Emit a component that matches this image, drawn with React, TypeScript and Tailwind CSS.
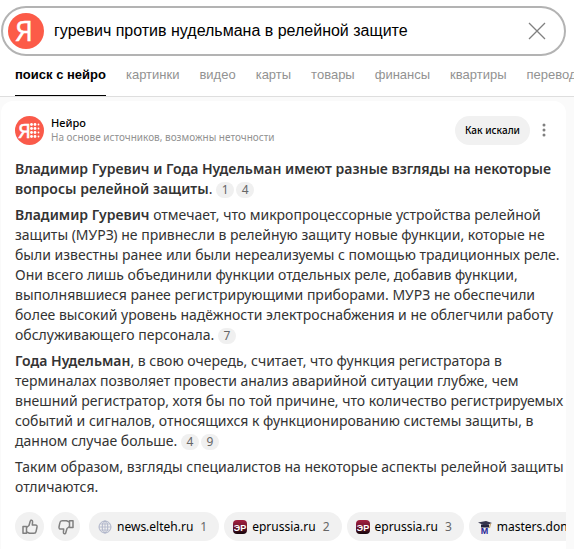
import { FC, ReactNode } from 'react';

const tabs = ['картинки', 'видео', 'карты', 'товары', 'финансы', 'квартиры', 'перевод'];

const sources = [
  { site: 'news.elteh.ru', num: 1, icon: 'globe' },
  { site: 'eprussia.ru', num: 2, icon: 'ep' },
  { site: 'eprussia.ru', num: 3, icon: 'ep' },
  { site: 'masters.don', num: 4, icon: 'masters' },
];

const Logo: FC = () => (
  <svg viewBox="0 0 36 36" className="size-9 shrink-0" aria-hidden="true">
    <circle cx="18" cy="18" r="18" fill="#fc5b48" />
    <text x="16" y="28" textAnchor="middle" fontSize="28" fill="#fff" stroke="#fff" strokeWidth="0.5" fontFamily="Open Sans, sans-serif">Я</text>
  </svg>
);

const NeuroLogo: FC = () => (
  <svg viewBox="0 0 29 29" className="size-[29px] shrink-0" aria-hidden="true">
    <circle cx="14.500" cy="14.500" r="14.500" fill="#fa5a4a" />
    <text x="9.500" y="22" textAnchor="middle" fontSize="20" fill="#fff" stroke="#fff" strokeWidth="0.6" fontFamily="Open Sans, sans-serif">Я</text>
    {[8.5, 12.5, 16.5, 20.5].map((y) =>
      [16.5, 20, 23.5].map((x) => (
        <circle key={`${x}-${y}`} cx={x} cy={y} r={x > 22 ? 0.9 : 1.4} fill="#fff" />
      ))
    )}
  </svg>
);

const ThumbIcon: FC<{ down?: boolean }> = ({ down }) => (
  <svg viewBox="0 0 16 16" className={down ? 'size-4 rotate-180' : 'size-4'} fill="none" stroke="#808080" strokeWidth="1.5" strokeLinejoin="round" aria-hidden="true">
    <path d="M1 7.500h3.500v6.800H1z" />
    <path d="M4.500 8.500 7 6.500 8.300 2c.3-1.300 2.400-1 2.300.6L10.300 6h3c1.300 0 1.900.9 1.700 2l-.9 4.300c-.2 1.200-1 2-2.200 2H7.500L4.500 13" />
  </svg>
);

const SourceIcon: FC<{ name: string }> = ({ name }) => {
  if (name === 'globe') {
    return (
      <svg viewBox="0 0 14 14" className="size-3.5 shrink-0" fill="none" stroke="#aeb4c9" aria-hidden="true">
        <circle cx="7" cy="7" r="6" />
        <ellipse cx="7" cy="7" rx="2.800" ry="6" />
        <path d="M7 1v12M1 7h12M2 4h10M2 10h10" strokeWidth="0.8" />
      </svg>
    );
  }
  if (name === 'ep') {
    return (
      <svg viewBox="0 0 14 14" className="size-3.5 shrink-0" aria-hidden="true">
        <defs>
          <linearGradient id="ep" x1="0" y1="0" x2="0" y2="1">
            <stop offset="0" stopColor="#a3203f" />
            <stop offset="0.5" stopColor="#70142f" />
            <stop offset="1" stopColor="#12050a" />
          </linearGradient>
        </defs>
        <rect width="14" height="14" rx="4" fill="url(#ep)" />
        <text x="7" y="10.500" textAnchor="middle" fontSize="9" fontWeight="700" fill="#fff" fontFamily="Liberation Sans, sans-serif">ЭР</text>
      </svg>
    );
  }
  return (
    <svg viewBox="0 0 14 14" className="size-3.5 shrink-0" aria-hidden="true">
      <path d="M3 4.500h8v3H3z" fill="#22223c" />
      <path d="M0 2.500 8 1l6 2-7 2.800z" fill="#34344c" />
      <path d="M12.500 3.500 11.500 8" stroke="#c39a54" fill="none" />
      <text x="6.500" y="13.500" textAnchor="middle" fontSize="9" fontWeight="700" fill="#262696" fontFamily="Liberation Sans, sans-serif">M</text>
    </svg>
  );
};

const Ref: FC<{ children: ReactNode }> = ({ children }) => (
  <button type="button" className="mr-0.5 inline-block h-4 w-[18px] rounded-full bg-[#f0f0f0] text-center align-middle text-xs leading-4 text-[#666]">
    {children}
  </button>
);

export default function App() {
  return (
    <div className="min-h-screen overflow-hidden bg-white font-['Noto_Sans',sans-serif] text-[#333]">
      <header className="pt-1.5">
        <form className="mr-2 ml-px flex h-[50px] items-center rounded-full border-2 border-[#b3b3b3] pr-3.5 pl-[5px]" onSubmit={(e) => e.preventDefault()}>
          <Logo />
          <input
            type="text"
            aria-label="Запрос"
            defaultValue="гуревич против нудельмана в релейной защите"
            className="ml-2.5 min-w-0 flex-1 bg-transparent font-['Liberation_Sans',sans-serif] text-base text-black outline-none"
          />
          <button type="button" aria-label="Очистить" className="p-1">
            <svg viewBox="0 0 18 18" className="size-[18px]" fill="none" stroke="#808080" strokeWidth="1.300">
              <path d="m1 1 16 16M17 1 1 17" />
            </svg>
          </button>
        </form>
        <nav className="flex h-[41px] gap-5 overflow-hidden border-b border-[#dedede] pl-[15px] font-['Liberation_Sans',sans-serif] text-[13px] leading-5 whitespace-nowrap text-[#929292]">
          <a href="#search" aria-current="page" className="border-b border-black pt-[9px] font-bold text-black">поиск с нейро</a>
          {tabs.map((tab) => (
            <a key={tab} href={`#${tab}`} className="pt-[9px]">{tab}</a>
          ))}
        </nav>
      </header>

      <main className="bg-[#fafafa] pt-1 pr-2 pl-px">
        <article className="min-h-[calc(100vh-101px)] rounded-t-xl bg-white pt-3.5 pl-3.5">
          <div className="flex items-center pr-4">
            <NeuroLogo />
            <div className="ml-[7px] min-w-0 flex-1 leading-[15px]">
              <h2 className="text-[11px] font-medium text-black">Нейро</h2>
              <p className="text-[10px] text-[#929292]">На основе источников, возможны неточности</p>
            </div>
            <button type="button" className="h-[29px] rounded-full bg-[#f1f1f1] px-2.5 text-[10px] font-medium text-black">Как искали</button>
            <button type="button" aria-label="Ещё" className="ml-2 px-1">
              <svg viewBox="0 0 4 14" className="h-3.5 w-1" fill="#808080">
                <circle cx="2" cy="2" r="1.500" />
                <circle cx="2" cy="7" r="1.500" />
                <circle cx="2" cy="12" r="1.500" />
              </svg>
            </button>
          </div>

          <div className="mt-3.5 flex flex-col gap-1.5 text-sm leading-5 whitespace-nowrap">
            <p>
              <b className="font-semibold">Владимир Гуревич и Года Нудельман имеют разные взгляды на некоторые<br />
              вопросы релейной защиты</b>. <Ref>1</Ref><Ref>4</Ref>
            </p>
            <p>
              <b className="font-semibold">Владимир Гуревич</b> отмечает, что микропроцессорные устройства релейной<br />
              защиты (МУРЗ) не привнесли в релейную защиту новые функции, которые не<br />
              были известны ранее или были нереализуемы с помощью традиционных реле.<br />
              Они всего лишь объединили функции отдельных реле, добавив функции,<br />
              выполнявшиеся ранее регистрирующими приборами. МУРЗ не обеспечили<br />
              более высокий уровень надёжности электроснабжения и не облегчили работу<br />
              обслуживающего персонала. <Ref>7</Ref>
            </p>
            <p>
              <b className="font-semibold">Года Нудельман</b>, в свою очередь, считает, что функция регистратора в<br />
              терминалах позволяет провести анализ аварийной ситуации глубже, чем<br />
              внешний регистратор, хотя бы по той причине, что количество регистрируемых<br />
              событий и сигналов, относящихся к функционированию системы защиты, в<br />
              данном случае больше. <Ref>4</Ref><Ref>9</Ref>
            </p>
            <p>
              Таким образом, взгляды специалистов на некоторые аспекты релейной защиты<br />
              отличаются.
            </p>
          </div>

          <div className="mt-[15px] flex overflow-hidden text-xs whitespace-nowrap">
            <button type="button" aria-label="Нравится" className="flex size-[29px] shrink-0 items-center justify-center rounded-full bg-[#f1f1f1]"><ThumbIcon /></button>
            <button type="button" aria-label="Не нравится" className="ml-[7px] flex size-[29px] shrink-0 items-center justify-center rounded-full bg-[#f1f1f1]"><ThumbIcon down /></button>
            <div className="ml-[9px] flex gap-[5px]">
              {sources.map((s) => (
                <a key={s.num} href={`#source-${s.num}`} className="flex h-[29px] shrink-0 items-center rounded-full bg-[#f1f1f1] pr-3 pl-[9px] text-black">
                  <SourceIcon name={s.icon} />
                  <span className="ml-[5px]">{s.site}</span>
                  <span className="ml-[7px] text-[#666]">{s.num}</span>
                </a>
              ))}
            </div>
          </div>
        </article>
      </main>
    </div>
  );
}
